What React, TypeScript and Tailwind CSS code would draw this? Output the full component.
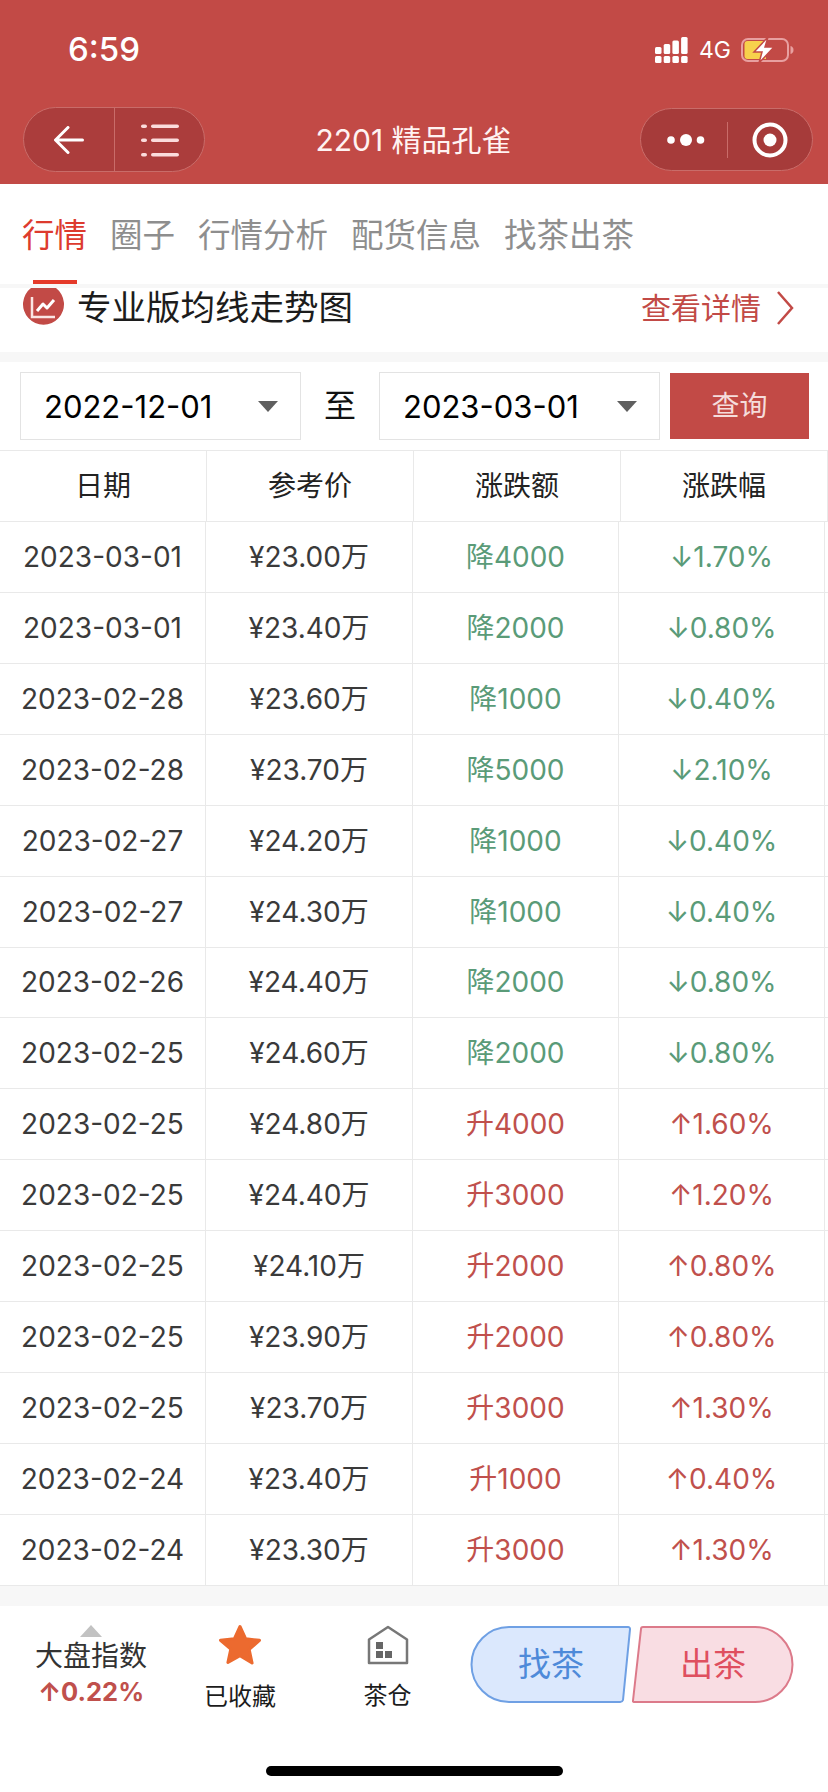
import React from "react";

const RED = "#c24a46";

const rows = [
  ["2023-03-01", "¥23.00万", "降4000", "↓1.70%"],
  ["2023-03-01", "¥23.40万", "降2000", "↓0.80%"],
  ["2023-02-28", "¥23.60万", "降1000", "↓0.40%"],
  ["2023-02-28", "¥23.70万", "降5000", "↓2.10%"],
  ["2023-02-27", "¥24.20万", "降1000", "↓0.40%"],
  ["2023-02-27", "¥24.30万", "降1000", "↓0.40%"],
  ["2023-02-26", "¥24.40万", "降2000", "↓0.80%"],
  ["2023-02-25", "¥24.60万", "降2000", "↓0.80%"],
  ["2023-02-25", "¥24.80万", "升4000", "↑1.60%"],
  ["2023-02-25", "¥24.40万", "升3000", "↑1.20%"],
  ["2023-02-25", "¥24.10万", "升2000", "↑0.80%"],
  ["2023-02-25", "¥23.90万", "升2000", "↑0.80%"],
  ["2023-02-25", "¥23.70万", "升3000", "↑1.30%"],
  ["2023-02-24", "¥23.40万", "升1000", "↑0.40%"],
  ["2023-02-24", "¥23.30万", "升3000", "↑1.30%"],
];

function StatusIcons() {
  return (
    <div className="flex items-center">
      <svg width="34" height="27" viewBox="0 0 34 27" fill="white">
        <rect x="0" y="19" width="6.5" height="7" rx="1.5" />
        <rect x="8.7" y="19" width="6.5" height="7" rx="1.5" />
        <rect x="17.4" y="19" width="6.5" height="7" rx="1.5" />
        <rect x="26.1" y="19" width="6.5" height="7" rx="1.5" />
        <rect x="0" y="10" width="6.5" height="7" rx="1.5" />
        <rect x="8.7" y="7" width="6.5" height="10" rx="1.5" />
        <rect x="17.4" y="3.5" width="6.5" height="13.5" rx="1.5" />
        <rect x="26.1" y="0" width="6.5" height="17" rx="1.5" />
      </svg>
      <span className="ml-[10px] text-[23px] leading-none text-white">4G</span>
      <svg className="ml-[10px]" width="53" height="28" viewBox="0 0 53 28">
        <rect x="1" y="3" width="46" height="22" rx="6" fill="none" stroke="#e8a0a0" strokeWidth="2" />
        <path d="M3.5 8a3 3 0 0 1 3-3H25v18H6.5a3 3 0 0 1-3-3z" fill="#f7d14c" />
        <path d="M49.5 10c2 .5 3 2 3 4s-1 3.500-3 4z" fill="#e8a0a0" />
        <path d="M27 1 13 16h8l-3 11 15-16h-9z" fill="white" stroke="#c24a46" strokeWidth="1.500" />
      </svg>
    </div>
  );
}

function NavBar() {
  return (
    <div className="flex items-center pl-[23px] pr-[15px] h-[65px]">
      <div className="w-[182px] h-[65px] flex rounded-full bg-[#ab3d3c] border border-[#c96c69]">
        <div className="w-[91px] h-full flex items-center justify-center border-r border-[#c96c69]">
          <svg width="30" height="28" viewBox="0 0 30 28" fill="none" stroke="white" strokeWidth="3" strokeLinecap="round" strokeLinejoin="round">
            <path d="M28.500 14H2M14 1.500 1.500 14 14 26.500" />
          </svg>
        </div>
        <div className="flex-1 flex items-center justify-center">
          <svg width="38" height="34" viewBox="0 0 38 34" fill="#fbdcdc">
            <rect x="0" y="1.500" width="6" height="3.600" rx="1.800" />
            <rect x="10" y="1.500" width="28" height="3.600" rx="1.800" />
            <rect x="0" y="15.500" width="6" height="3.600" rx="1.800" />
            <rect x="10" y="15.500" width="28" height="3.600" rx="1.800" />
            <rect x="0" y="30" width="6" height="3.600" rx="1.800" />
            <rect x="10" y="30" width="28" height="3.600" rx="1.800" />
          </svg>
        </div>
      </div>
      <div className="flex-1 text-center text-[30px] leading-none text-[#fff3f2] pr-[18px]">2201 精品孔雀</div>
      <div className="w-[173px] h-[63px] flex items-center rounded-full bg-[#a63b3a] border border-[#c96c69]">
        <div className="w-[87px] h-[36px] flex items-center justify-center border-r border-[#c96c69] pl-1">
          <svg width="40" height="14" viewBox="0 0 40 14" fill="white">
            <circle cx="5" cy="7" r="3.800" />
            <circle cx="20" cy="7" r="6" />
            <circle cx="34.500" cy="7" r="3.800" />
          </svg>
        </div>
        <div className="flex-1 flex items-center justify-center">
          <svg width="36" height="36" viewBox="0 0 36 36" fill="none">
            <circle cx="18" cy="18" r="15.500" stroke="white" strokeWidth="4" />
            <circle cx="18" cy="18" r="6.500" fill="white" />
          </svg>
        </div>
      </div>
    </div>
  );
}

function Tabs() {
  const tabs = ["行情", "圈子", "行情分析", "配货信息", "找茶出茶"];
  return (
    <div className="relative h-[100px] bg-white flex items-start pl-[22px] pt-[29px] gap-[23px]">
      {tabs.map((t, i) => (
        <span key={t} className={"text-[32.5px] leading-[46px] " + (i === 0 ? "text-[#dd3b2e]" : "text-[#8e8e8e]")}>
          {t}
        </span>
      ))}
      <div className="absolute left-[33px] bottom-0 w-[44px] h-[4px] bg-[#e53a2a]" />
    </div>
  );
}

function ProHeading() {
  return (
    <div className="h-[64px] bg-white flex items-start justify-between pl-[23px] pr-[34px]">
      <div className="flex items-start">
        <svg width="41" height="40" viewBox="0 0 41 40">
          <path d="M8 0h25a20.500 20.500 0 1 1-25 0z" fill={RED} />
          <path d="M9 9v20h23" fill="none" stroke="#fbe6e4" strokeWidth="2.500" />
          <path d="M14 23l6-7 4 4 7-8" fill="none" stroke="white" strokeWidth="3" strokeLinejoin="round" />
        </svg>
        <span className="ml-[13px] text-[34.5px] leading-[40px] text-[#1c1c1c]">专业版均线走势图</span>
      </div>
      <div className="flex items-center h-[40px]">
        <span className="text-[30px] leading-[40px] text-[#c24a46]">查看详情</span>
        <svg className="ml-[15px]" width="18" height="36" viewBox="0 0 18 36" fill="none" stroke="#c24a46" strokeWidth="2.500">
          <path d="M2 2l14 16L2 34" />
        </svg>
      </div>
    </div>
  );
}

function DateBox({ value }: { value: string }) {
  return (
    <div className="w-[281px] h-[68px] border border-[#e3e3e3] bg-white flex items-center justify-between pl-[23px] pr-[22px]">
      <span className="text-[31px] leading-none text-black">{value}</span>
      <svg width="20" height="11" viewBox="0 0 20 11" fill="#5f5f5f">
        <path d="M0 0h20L10 11z" />
      </svg>
    </div>
  );
}

function QueryBar() {
  return (
    <div className="h-[88px] bg-white flex items-start pt-[10px] pl-[20px]">
      <DateBox value="2022-12-01" />
      <span className="w-[78px] text-center text-[32px] leading-[68px] text-[#111]">至</span>
      <DateBox value="2023-03-01" />
      <div className="ml-[10px] mt-[1px] w-[139px] h-[66px] bg-[#c24a46] flex items-center justify-center text-[28px] text-[#f5dcdb]">
        查询
      </div>
    </div>
  );
}

function PriceTable() {
  return (
    <div className="bg-white">
      <div className="h-[72px] grid grid-cols-[207px_207px_207px_207px] border-t border-b border-[#e9e9e9] text-[28px] text-[#222]">
        {["日期", "参考价", "涨跌额", "涨跌幅"].map((h) => (
          <div key={h} className="flex items-center justify-center border-r border-[#e9e9e9]">
            {h}
          </div>
        ))}
      </div>
      {rows.map((r, i) => {
        const down = r[2].startsWith("降");
        const color = down ? "text-[#5a9b78]" : "text-[#c0504c]";
        return (
          <div key={i} className="h-[70.93px] grid grid-cols-[206px_207px_206px_206px] border-b border-[#e9e9e9] text-[28px]">
            <div className="flex items-center justify-center border-r border-[#e9e9e9] text-[#3a3a3a]">{r[0]}</div>
            <div className="flex items-center justify-center border-r border-[#e9e9e9] text-[#3a3a3a]">{r[1]}</div>
            <div className={"flex items-center justify-center border-r border-[#e9e9e9] " + color}>{r[2]}</div>
            <div className={"flex items-center justify-center border-r border-[#e9e9e9] " + color}>{r[3]}</div>
          </div>
        );
      })}
    </div>
  );
}

function BottomBar() {
  return (
    <div className="relative h-[186px] bg-white flex items-start">
      <div className="w-[182px] pt-[19px] flex flex-col items-center">
        <svg width="22" height="12" viewBox="0 0 22 12" fill="#c2c2c2">
          <path d="M11 0l11 12H0z" />
        </svg>
        <span className="mt-[2px] text-[28px] leading-[34px] text-[#333]">大盘指数</span>
        <span className="mt-[5px] text-[25.5px] leading-[28px] font-bold text-[#c0504c]">↑0.22%</span>
      </div>
      <div className="w-[116px] pt-[18px] flex flex-col items-center">
        <svg width="44" height="42" viewBox="0 0 44 42" fill="#ec6a2f" stroke="#ec6a2f" strokeWidth="3" strokeLinejoin="round">
          <path d="M22 2.500l5.700 12.300 13.800 1.500-10.300 9.200 2.900 13.500L22 31.600 9.900 38.500l2.900-13.500L2.500 16.300l13.800-1.500z" />
        </svg>
        <span className="mt-[16px] text-[24px] leading-[30px] text-[#1c1c1c]">已收藏</span>
      </div>
      <div className="w-[172px] pl-[7px] pt-[19px] flex flex-col items-center">
        <svg width="42" height="40" viewBox="0 0 42 40" fill="none">
          <path d="M2 38V14.500L21 2l19 12.500V38z" stroke="#777" strokeWidth="2.500" strokeLinejoin="round" />
          <path d="M9 17h7v7H9zM9 26h7v7H9zM18 26h7v7h-7z" fill="#666" />
        </svg>
        <span className="mt-[16px] text-[24px] leading-[30px] text-[#1c1c1c]">茶仓</span>
      </div>
      <div className="pt-[19px] flex">
        <div className="relative w-[162px] h-[79px] flex items-center justify-center text-[33px] text-[#4e8ad9]">
          <svg className="absolute inset-0" width="162" height="79" viewBox="0 0 162 79">
            <path
              d="M39 2H158a2 2 0 0 1 2 2.300L153 75a3 3 0 0 1-3 2H39A37.500 37.500 0 0 1 39 2z"
              fill="#dbe8fd"
              stroke="#6fa0e4"
              strokeWidth="2"
            />
          </svg>
          <span className="relative">找茶</span>
        </div>
        <div className="relative w-[162px] h-[79px] flex items-center justify-center text-[33px] text-[#df4f5f]">
          <svg className="absolute inset-0" width="162" height="79" viewBox="0 0 162 79">
            <path
              d="M11 2H123A37.500 37.500 0 0 1 123 77H2a1 1 0 0 1-1-1.500L9 4a2 2 0 0 1 2-2z"
              fill="#f9dde3"
              stroke="#dc7a8a"
              strokeWidth="2"
            />
          </svg>
          <span className="relative">出茶</span>
        </div>
      </div>
      {/* home indicator */}
      <div className="absolute left-[266px] top-[160px] w-[297px] h-[10px] rounded-full bg-black" />
    </div>
  );
}

export default function App() {
  return (
    <div
      className="w-[828px] h-[1792px] overflow-hidden bg-white"
      style={{ fontFamily: 'Inter, "Noto Sans CJK SC", sans-serif' }}
    >
      <div className="h-[184px] bg-[#c24a46]">
        <div className="h-[107px] flex items-start justify-between pt-[29px] pl-[68px] pr-[34px]">
          <span className="text-[33px] leading-[40px] font-medium text-white">6:59</span>
          <div className="pt-[7px]">
            <StatusIcons />
          </div>
        </div>
        <NavBar />
      </div>
      <Tabs />
      <div className="h-[4px] bg-[#f7f7f7]" />
      <ProHeading />
      <div className="h-[10px] bg-[#f7f7f7]" />
      <QueryBar />
      <PriceTable />
      <div className="h-[20px] bg-[#f7f7f7]" />
      <BottomBar />
    </div>
  );
}
